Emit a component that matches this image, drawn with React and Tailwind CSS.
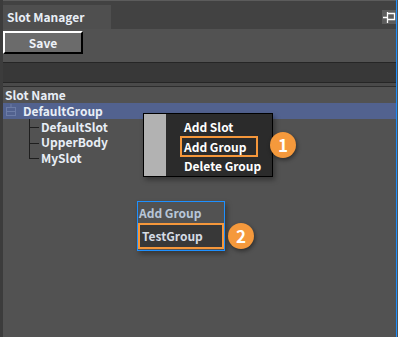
import React from 'react';

const font = { fontFamily: '"Noto Sans CJK SC", "Noto Sans", sans-serif' };

const PinIcon = () => (
  <svg width="14" height="14" viewBox="0 0 14 14" className="block">
    <path d="M1 7.5H5M5.5 2V13M5.5 3.5H12.5V9.5H5.5" stroke="#fff" strokeWidth="1.3" fill="none" />
  </svg>
);

const TreeIcon = () => (
  <svg width="18" height="14" viewBox="0 0 18 14" className="block">
    <rect x="3.5" y="3.5" width="9" height="8" stroke="#6c7ca6" fill="none" />
    <path d="M3.5 7.5H12.5M8 0V3.5" stroke="#6c7ca6" fill="none" />
  </svg>
);

const Badge = ({ n, className }) => (
  <div
    className={`absolute w-[26px] h-[26px] rounded-full bg-[#f5993c] text-white text-[17px] font-bold flex items-center justify-center shadow-[1px_2px_4px_rgba(0,0,0,0.45)] ${className}`}
  >
    {n}
  </div>
);

const children = ['DefaultSlot', 'UpperBody', 'MySlot'];

export default function App() {
  return (
    <div
      className="relative w-[398px] h-[337px] bg-[#525252] flex overflow-hidden text-[12px] font-bold text-[#e8eef6]"
      style={font}
    >
      <div className="w-[3px] bg-[#3c3c3c]" />

      <div className="flex-1 flex flex-col">
        {/* tab bar */}
        <div className="h-[29px] bg-[#424242] border-t border-[#5c5c5c] flex items-end justify-between">
          <div className="w-[108px] h-[24px] bg-[#4f4f4f] pl-[4px] flex items-center leading-none">
            Slot Manager
          </div>
          <div className="self-start mt-[9px] w-[14px] h-[14px] bg-[#5c5c5c] flex items-center justify-center">
            <PinIcon />
          </div>
        </div>

        {/* toolbar */}
        <div className="h-[33px] pt-[2px]">
          <button className="w-[80px] h-[23px] bg-[#6b6b6b] border-2 border-t-white border-l-white border-r-black border-b-black flex items-center justify-center leading-none text-[#eef2f8]">
            Save
          </button>
        </div>

        <div className="h-[21px] bg-[#383838] border-y border-[#262626]" />
        <div className="h-[3px] bg-[#4a4a4a] border-b border-[#2e2e2e] box-content" />

        {/* tree */}
        <div className="h-[16px] pl-[2px] flex items-center leading-none">Slot Name</div>
        <div className="h-[16px] bg-[#52628f] flex items-center leading-none">
          <TreeIcon />
          <span className="ml-[2px]">DefaultGroup</span>
        </div>
        <div className="relative pl-[38px]">
          <div className="absolute left-[26px] top-0 h-[40px] w-px bg-[#1e1e1e]" />
          {children.map((c) => (
            <div key={c} className="relative h-[15.5px] flex items-center leading-none">
              <div className="absolute left-[-12px] top-[8px] w-[10px] h-px bg-[#1e1e1e]" />
              {c}
            </div>
          ))}
        </div>
      </div>

      <div className="w-px bg-[#1e90ff]" />
      <div className="w-px bg-[#525252]" />

      {/* context menu */}
      <div className="absolute left-[143px] top-[113px] w-[130px] h-[64px] border border-black bg-[#2b2b2b] flex shadow-[2px_3px_5px_rgba(0,0,0,0.35)]">
        <div className="w-[22px] bg-[#b2b2b2]" />
        <div className="flex-1 pl-[18px] pt-[4px] flex flex-col text-white leading-none">
          <div className="h-[19px] flex items-center">Add Slot</div>
          <div className="h-[20px] flex items-center">Add Group</div>
          <div className="h-[20px] flex items-center">Delete Group</div>
        </div>
      </div>
      <div className="absolute left-[180px] top-[136px] w-[78px] h-[21px] border-2 border-[#f5973b]" />
      <Badge n="1" className="left-[270px] top-[132px]" />

      {/* add group popup */}
      <div className="absolute left-[137px] top-[201px] w-[88px] h-[50px] border border-[#1e90ff] shadow-[2px_3px_5px_rgba(0,0,0,0.35)]">
        <div className="h-[21px] pl-px flex items-center leading-none text-[#b8c6d8]">Add Group</div>
        <div className="h-[26px] bg-[#383838] border-2 border-[#f5973b] pl-[2px] flex items-center leading-none text-[#d4dbe4]">
          TestGroup
        </div>
      </div>
      <Badge n="2" className="left-[228px] top-[223px]" />
    </div>
  );
}
